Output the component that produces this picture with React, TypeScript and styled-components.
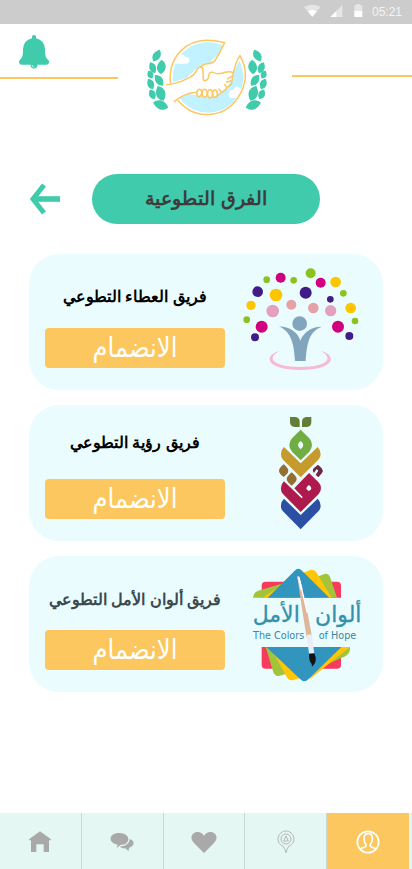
import React from "react";
import styled, { createGlobalStyle } from "styled-components";

const mint = "#40cbac";
const amber = "#fcc75e";
const bodyFont = `"Liberation Sans", sans-serif`;

const GlobalStyle = createGlobalStyle`
  *, *::before, *::after { box-sizing: border-box; }
  body { margin: 0; background: #fff; font-family: ${bodyFont}; }
  button { font-family: inherit; border: 0; padding: 0; cursor: pointer; }
  svg { display: block; }
`;

const Screen = styled.div`
  min-height: 100vh;
  display: flex;
  flex-direction: column;
`;

const StatusBar = styled.div`
  height: 24px;
  display: flex;
  justify-content: flex-end;
  align-items: center;
  padding-right: 10px;
  background: #ccc;
  color: #f3f3f3;
  font-size: 12px;
`;

const StatusIcons = styled.svg`
  width: 60px;
  height: 24px;
  margin-right: 8px;
`;

const Header = styled.header`
  display: grid;
  grid-template-columns: 59fr 87fr 60fr;
`;

const HeaderSide = styled.div<{ $height: number }>`
  height: ${(p) => p.$height}px;
  padding: 10px 0 0 18px;
  border-bottom: 2px solid ${amber};
`;

const IconButton = styled.button`
  display: block;
  background: none;
`;

const Brand = styled.svg`
  width: 100%;
  height: 100px;
`;

const TitleRow = styled.div`
  display: grid;
  grid-template-columns: 32px 1fr 32px;
  align-items: center;
  gap: 31px;
  padding: 0 29px;
  margin-top: 50px;
`;

const PageTitle = styled.h1`
  margin: 0;
  height: 50px;
  border-radius: 25px;
  background: ${mint};
  color: #3c3c3c;
  font-size: 19px;
  line-height: 50px;
  font-weight: 700;
  text-align: center;
`;

const TeamList = styled.main`
  display: flex;
  flex-direction: column;
  gap: 15px;
  padding: 30px 29px 60px;
`;

const TeamCard = styled.article`
  display: grid;
  grid-template-columns: 180px 1fr;
  justify-items: end;
  min-height: 136px;
  padding-left: 16px;
  border-radius: 30px;
  background: #ebfcff;
`;

const TeamInfo = styled.div`
  width: 100%;
  display: flex;
  flex-direction: column;
  justify-content: flex-end;
  padding-bottom: 22px;
`;

const TeamName = styled.h2<{ $color: string; $gap: number }>`
  margin: 0 0 ${(p) => p.$gap}px;
  color: ${(p) => p.$color};
  font-size: 16px;
  line-height: 24px;
  font-weight: 700;
  text-align: center;
  white-space: nowrap;
`;

const JoinButton = styled.button`
  height: 40px;
  border-radius: 4px;
  background: ${amber};
  color: #fff;
  font-family: "DejaVu Sans Condensed", "DejaVu Sans", sans-serif;
  font-size: 27px;
  line-height: 36px;
`;

const TeamLogo = styled.svg`
  width: 148px;
  height: 136px;
`;

const TabBar = styled.nav`
  display: grid;
  grid-template-columns: repeat(5, 1fr);
  height: 56px;
  margin-top: auto;
  padding-right: 3px;
  background: #e4f7f3;
`;

const Tab = styled.a<{ $active?: boolean }>`
  display: flex;
  align-items: center;
  justify-content: center;
  padding-top: 1px;
  color: ${(p) => (p.$active ? "#fff" : "#a9a9a9")};
  background: ${(p) => (p.$active ? amber : "transparent")};
  border-right: ${(p) => (p.$active ? "0" : "1px solid #cbd8d5")};
`;

const LEAVES: [number, number, number, number, number][] = [
  [50, 77, 11, 20, 28],
  [64, 111, 13, 22, 3],
  [38, 113, 10, 18, -25],
  [31, 134, 9, 13, -28],
  [57, 151, 11, 20, -38],
  [32, 162, 10, 17, -25],
  [62, 190, 14, 24, -22],
  [37, 193, 10, 16, -27],
  [62, 225, 13, 24, -72],
];

const Wreath = () => (
  <g fill={mint}>
    {LEAVES.map(([x, y, w, h, r]) => (
      <path
        key={`${x}-${y}`}
        transform={`translate(${x} ${y}) rotate(${r})`}
        d={`M0 ${-h}C${w * 1.3} ${-h * 0.5} ${w * 1.4} ${h * 0.3} 0 ${h}C${-w * 1.4} ${h * 0.5} ${-w * 1.3} ${-h * 0.3} 0 ${-h}Z`}
      />
    ))}
  </g>
);

const BrandLogo = () => (
  <Brand viewBox="-66 -18 522 300" role="img" aria-label="شعار التطوع">
    <Wreath />
    <g transform="translate(402 0) scale(-1 1)">
      <Wreath />
    </g>
    <circle cx="204" cy="142" r="106" fill="#c2f2ff" />
    <path fill="#fff" d="M98 101v-18c8-4 14-10 22-8 6-4 14 0 15 6 18-1 17 20 2 20zM266 192c-1-10 8-14 14-11 2-12 20-13 23-2 6-3 12 3 9 8l-17 17h-20c-8 0-9-7-9-12z" />
    <path fill="#fff" d="M253 38l54 34-28 58c3 20-20 42-38 59l-14 12-54-4-21-4q-24 4-53 20l-22-50 62-18 34-33 15-9 21-4 23-25 15-25z" />
    <g fill="none" stroke={amber} strokeWidth="4.5" strokeLinecap="round" strokeLinejoin="round">
      <path d="M91 157C85 80 139 30 203 31Q230 32 254 38Q246 52 239 68L224 93Q216 101 201 101Q186 104 181 112" />
      <path d="M80 164Q101 163 124 154L148 143Q162 136 168 125Q173 111 183 110Q190 113 189 124L190 150Q200 155 205 143L207 133Q209 127 217 126Q227 133 244 130Q260 123 275 126Q283 131 278 138L263 146M280 128L287 103Q292 88 300 77C323 118 320 163 294 203C250 268 165 270 115 212" />
      <path d="M103 215Q116 203 132 196Q150 189 169 187M278 138L276 152L260 156M276 152Q277 166 260 172L254 164M260 172Q257 184 244 187L237 177M244 187Q238 195 230 198" />
      <ellipse cx="178" cy="189" rx="7" ry="11" transform="rotate(12 178 189)" fill="#fff" />
      <ellipse cx="194" cy="190" rx="7" ry="12" fill="#fff" />
      <ellipse cx="210" cy="191" rx="7" ry="12" fill="#fff" />
      <ellipse cx="225" cy="191" rx="7" ry="11" fill="#fff" />
    </g>
  </Brand>
);

const DOTS: [number, number, number, string][] = [
  [95, 89, 10, "#8cc220"], [137, 83, 15, "#d0007f"], [176, 91, 10, "#8cc220"],
  [227, 70, 15, "#8cc220"], [257, 98, 15, "#d0007f"], [302, 96, 16, "#fdc600"],
  [68, 125, 16, "#411b88"], [123, 135, 19, "#fdc600"], [212, 128, 18, "#411b88"],
  [325, 130, 10, "#8cc220"], [286, 148, 10, "#411b88"], [48, 166, 14, "#fdc600"],
  [113, 183, 19, "#e3a1bd"], [169, 164, 15, "#e5a1a5"], [235, 174, 16, "#e5a1a5"],
  [287, 182, 17, "#e3a1bd"], [347, 174, 16, "#fdc600"], [35, 209, 10, "#8cc220"],
  [80, 230, 18, "#d0007f"], [309, 230, 18, "#d0007f"], [360, 213, 10, "#8cc220"],
  [60, 262, 12, "#411b88"], [343, 258, 12, "#411b88"], [194, 221, 22, "#80a5bd"],
];

const GivingLogo = () => (
  <TeamLogo viewBox="0 12 444 408" role="img" aria-label="العطاء">
    {DOTS.map(([x, y, r, c]) => (
      <circle key={`${x}-${y}`} cx={x} cy={y} r={r} fill={c} />
    ))}
    <path fill="#80a5bd" d="M132 229C165 231 188 246 196 272C205 247 231 229 260 230C226 244 216 270 212 333H180C177 273 165 245 132 229Z" />
    <path fill="#f7bad2" d="M134 303C85 315 89 359 196 360C304 359 306 314 257 303C296 323 282 350 196 351C106 350 96 321 134 303Z" />
  </TeamLogo>
);

const VisionLogo = () => (
  <TeamLogo viewBox="0 15 444 408" role="img" aria-label="رؤية">
    <path fill="#647e38" d="M165 51h16q13 2 13 14v16h-15q-14-2-14-15zM229 51h-15q-13 2-13 14v16h15q13-2 13-15z" />
    <path fill="#71ad43" fillRule="evenodd" d="M197 89l26 26q8 9 8 20t-8 20l-26 26-26-26q-8-9-8-20t8-20zM197 123q-8 6-8 12t8 13q8-7 8-13t-8-12z" />
    <path fill="#c69b2d" d="M147 141l50 49 51-49q9 9 9 22 0 9-7 16l-53 53-53-53q-7-7-6-18 0-12 9-20z" />
    <path fill="#937030" d="M146 193q14 11 14 19t-14 19q-14-11-14-19t14-19zM170 217q15 12 15 20t-15 20q-15-12-15-20t15-20z" />
    <path fill="#ad1a4b" fillRule="evenodd" d="M147 244l53 51 3-4-25-26 44-46 28 27q8 8 8 18t-7 18l-54 54-53-54q-7-7-6-18 0-12 9-20zM222 255q-8 5-8 10t8 8q7-3 7-8t-7-10z" />
    <path fill="#6d2942" d="M249 194l11 11q6 7 1 14l-11 13-8-8 8-12-5-5-8 12q-7-9 0-15z" />
    <path fill="#2b4fa3" d="M147 296l50 49 51-49q9 9 9 22 0 9-7 16l-53 54-53-54q-7-7-6-18 0-12 9-20z" />
  </TeamLogo>
);

const HopeLogo = () => (
  <TeamLogo viewBox="0 15 444 408" role="img" aria-label="ألوان الأمل The Colors of Hope">
    <path fill="#f63b5d" d="M80 140v-36q0-12 12-12h214q12 0 12 12v36zM80 288v53q0 12 12 12h214q12 0 12-12v-53z" />
    <path fill="#a3c43a" d="M54 140q2-18 16-21l75-22 60 43zM240 80l28-11q12-3 17 8l21 63h-55zM92 288l23 76q4 12 17 11l48-14V288zM345 288q2 22-17 29l-93 40-10-69z" />
    <path fill="#fdc60b" d="M83 140l77-51 60 51zM205 65l21-8q12-3 18 7l46 76h-60zM106 288l48 88q5 13 18 12l24-7V288zM345 288L225 384v-96z" />
    <path fill="#3195bd" d="M98 140l81-81q11-11 22 0l82 81zM94 288h225l-99 97q-12 12-24 0z" />
    <g fill="#3491aa" stroke="#3491aa" strokeWidth="1" fontFamily='"DejaVu Sans", sans-serif'>
      <text x="53" y="212" fontSize="66" direction="rtl" textAnchor="end">الأمل</text>
      <text x="240" y="212" fontSize="66" direction="rtl" textAnchor="end">ألوان</text>
    </g>
    <g fill="#3c86a1" fontSize="29" fontFamily='"DejaVu Sans", sans-serif'>
      <text x="54" y="264">The Colors</text>
      <text x="251" y="264">of Hope</text>
    </g>
    <path fill="#e0b69b" d="M187 77q3-3 6 0l26 115 12 65-16 3-12-74z" />
    <path fill="#e8edf7" d="M187 77q3-3 6 0l10 38-7 3zM215 252l15-2 8 58h-16z" />
    <path fill="#fff" d="M190 80l4 0 25 105-4 0z" />
    <path fill="#111317" d="M222 308l16-1q9 19 0 32l-7 8-1-8q-9-8-8-31z" />
  </TeamLogo>
);

const TEAMS = [
  { name: "فريق العطاء التطوعي", color: "#000", gap: 19, Logo: GivingLogo },
  { name: "فريق رؤية التطوعي", color: "#000", gap: 24, Logo: VisionLogo },
  { name: "فريق ألوان الأمل التطوعي", color: "#3a4a50", gap: 18, Logo: HopeLogo },
];

export default function App() {
  return (
    <Screen>
      <GlobalStyle />
      <StatusBar>
        <StatusIcons viewBox="0 0 180 72" aria-hidden="true">
          <path fill="#e5e5e5" d="M0 21Q25 8 50 21L25 50Z" />
          <path fill="#fff" d="M12 35Q25 24 38 35L25 50Z" />
          <path fill="#e5e5e5" d="M79 51L115 15V51Z" />
          <path fill="#fff" d="M79 51L97 33V51Z" />
          <path fill="#e5e5e5" d="M151 16h6v-4h12v4h6v18h-24z" />
          <path fill="#fff" d="M151 33h24v18h-24z" />
        </StatusIcons>
        <time>05:21</time>
      </StatusBar>
      <Header>
        <HeaderSide $height={55}>
          <IconButton aria-label="الإشعارات">
            <svg width="32" height="36" viewBox="54 102 96 108">
              <circle cx="102" cy="196" r="10" fill={mint} />
              <path fill="none" stroke="#fff" strokeWidth="2" d="M96 194q0 8 7 8" />
              <path fill={mint} d="M96 115v-5q0-5 6-5t6 5v5q26 6 27 33c0 18 2 26 9 31q5 4 3 9-2 6-8 6H65q-6 0-8-6-1-5 3-9c8-6 9-14 9-31q1-27 27-33z" />
            </svg>
          </IconButton>
        </HeaderSide>
        <BrandLogo />
        <HeaderSide $height={53} />
      </Header>
      <TitleRow>
        <IconButton aria-label="رجوع">
          <svg width="32" height="32" viewBox="0 0 32 32" fill="none" stroke={mint}>
            <path strokeWidth="5" d="M15 2L4 16l11 14" />
            <path strokeWidth="5.6" d="M5 16h26" />
          </svg>
        </IconButton>
        <PageTitle dir="rtl">الفرق التطوعية</PageTitle>
      </TitleRow>
      <TeamList>
        {TEAMS.map(({ name, color, gap, Logo }) => (
          <TeamCard key={name}>
            <TeamInfo>
              <TeamName dir="rtl" $color={color} $gap={gap}>{name}</TeamName>
              <JoinButton>الانضمام</JoinButton>
            </TeamInfo>
            <Logo />
          </TeamCard>
        ))}
      </TeamList>
      <TabBar>
        <Tab href="#home" aria-label="الرئيسية">
          <svg width="22" height="22" viewBox="0 0 66 66" fill="currentColor">
            <path d="M33 1L0 25l3 4 3-2v36h16V40h22v23h16V27l3 2 3-4z" />
          </svg>
        </Tab>
        <Tab href="#chat" aria-label="المحادثات">
          <svg width="24" height="20" viewBox="331 94 72 60" fill="currentColor">
            <path d="M359 97c35 0 36 36 3 36q-7 8-12 8 4-4 4-9c-31-6-27-35 5-35zM390 115c17 5 15 21-1 26-2 3-2 5-1 9-5-1-8-3-10-7-9 1-14-1-17-6 19 0 29-11 29-22z" />
          </svg>
        </Tab>
        <Tab href="#favorites" aria-label="المفضلة">
          <svg width="26" height="24" viewBox="0 0 26 24" fill="currentColor">
            <path d="M13 23L3 13C-2 8 1 2 6.500 2 10 2 12 4 13 6 14 4 16 2 19.500 2 25 2 28 8 23 13z" />
          </svg>
        </Tab>
        <Tab href="#places" aria-label="الأماكن">
          <svg width="18" height="24" viewBox="214 88 54 72" fill="none" stroke="currentColor" strokeWidth="2.5">
            <path d="M241 156q-4-14-8-19c-28-12-15-46 8-46s36 34 8 46q-4 5-8 19z" />
            <circle cx="241" cy="115" r="15" />
            <path d="M241 106l7 15h-14z" />
          </svg>
        </Tab>
        <Tab href="#profile" aria-label="حسابي" $active aria-current="page">
          <svg width="24" height="24" viewBox="451 88 72 72" fill="none" stroke="currentColor" strokeWidth="5">
            <circle cx="487" cy="124" r="32" />
            <path d="M463 146q5-5 12-6 8-2 6-8-6-8-6-18 0-15 13-15 12 0 12 15 0 10-6 18-2 6 6 8 7 1 12 6" />
          </svg>
        </Tab>
      </TabBar>
    </Screen>
  );
}
